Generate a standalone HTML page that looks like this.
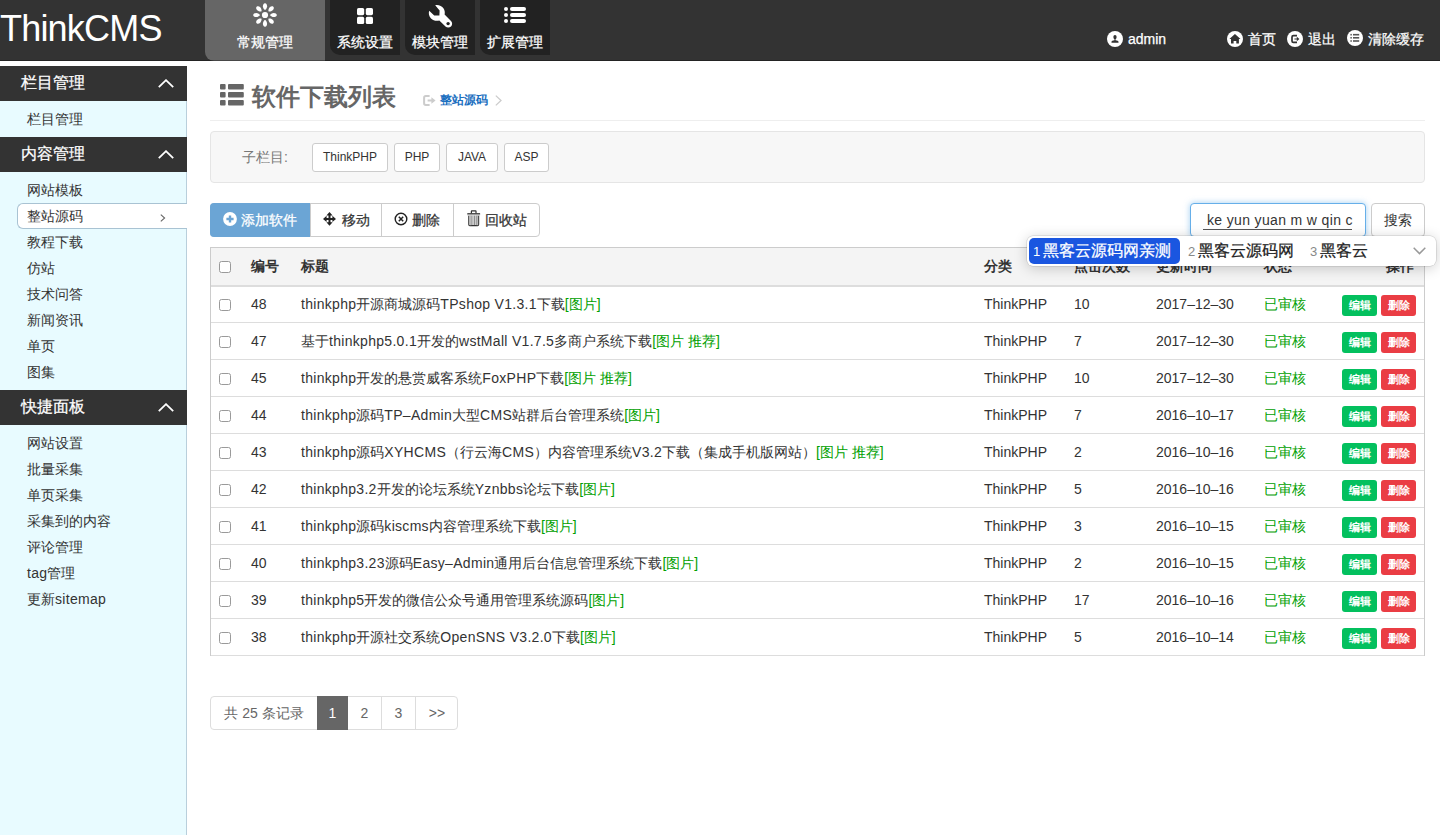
<!DOCTYPE html>
<html><head><meta charset="utf-8">
<style>
*{box-sizing:border-box;margin:0;padding:0}
html,body{width:1440px;height:835px;overflow:hidden;background:#fff}
body{font-family:"Liberation Sans",sans-serif;font-size:14px;color:#333;position:relative}
.abs{position:absolute}
#hd{position:absolute;left:0;top:0;width:1440px;height:61px;background:#333}
#hdl{position:absolute;left:0;top:60px;width:1440px;height:1px;background:rgba(0,0,0,.3)}
#logo{position:absolute;left:0;top:9px;font-size:36px;line-height:40px;color:#fff;letter-spacing:-0.8px}
.tab{position:absolute;top:0;height:55px;background:#222;border-bottom-left-radius:10px;color:#fff;text-align:center}
.tab.on{background:#666;height:61px;border-bottom-left-radius:9px}
.tab span{position:absolute;left:0;right:0;top:34px;font-size:14px;line-height:16px;font-weight:500}
.tab svg{position:absolute}
.hr{position:absolute;top:31px;color:#fff;font-size:14px;line-height:16px}
.hic{position:absolute;top:31px;width:16px;height:16px}
#side{position:absolute;left:0;top:66px;width:187px;height:769px;background:#e8fbff;border-right:1px solid #b9cfdc}
.sh{position:absolute;left:0;width:187px;height:35px;background:#333;color:#fff;font-size:16px;line-height:33px;padding-left:21px}
.sh svg{position:absolute;left:158px;top:13px}
.si{position:absolute;left:27px;font-size:14px;line-height:26px;color:#333}
#cur{position:absolute;left:17px;top:137px;width:170px;height:26px;background:#fff;border:1px solid #a9c3d3;border-right:none;border-radius:6px 0 0 6px}

#ttl{position:absolute;left:252px;top:83px;font-size:24px;line-height:28px;color:#666;font-weight:bold}
#bc{position:absolute;left:440px;top:93px;font-size:12px;line-height:14px;color:#1b6fbf;font-weight:bold}
#hrl{position:absolute;left:210px;top:120px;width:1215px;height:1px;background:#eee}
#sub{position:absolute;left:210px;top:131px;width:1215px;height:52px;background:#f7f7f7;border:1px solid #e5e5e5;border-radius:4px}
#sub .lb{position:absolute;left:31px;top:17px;font-size:14px;line-height:16px;color:#777}
.sb{position:absolute;top:11px;height:29px;border:1px solid #ccc;border-radius:3px;background:#fff;font-size:12px;line-height:27px;text-align:center;color:#333}
#tb{position:absolute;left:210px;top:203px;width:330px;height:34px;border:1px solid #ccc;border-radius:4px;background:#fff}
.tbb{position:absolute;top:0;height:32px;border-left:1px solid #ccc;font-size:14px;line-height:32px;color:#333}
.tbb svg{position:absolute}
.tbb span{position:absolute;top:0}
#sinp{position:absolute;left:1190px;top:203px;width:176px;height:34px;border:1px solid #66afe9;border-radius:4px;background:#fff;box-shadow:0 0 6px rgba(102,175,233,.6)}
#sinp span{position:absolute;left:16px;top:8px;font-size:14px;line-height:16px;color:#333;white-space:nowrap;letter-spacing:0.35px}
#sinp i{position:absolute;left:12px;top:25px;width:149px;height:1px;background:#555}
#sbtn{position:absolute;left:1371px;top:203px;width:54px;height:34px;border:1px solid #ccc;border-radius:4px;background:#fff;font-size:14px;line-height:32px;text-align:center;color:#333}

#tbl{position:absolute;left:210px;top:247px;width:1215px;height:409px;border:1px solid #ccc;background:#fff}
#th{position:absolute;left:0;top:0;width:1213px;height:39px;background:#f4f4f4;border-bottom:2px solid #ddd}
.tr{position:absolute;left:0;width:1213px;height:37px;border-bottom:1px solid #ddd}
.c{position:absolute;top:0;line-height:36px;white-space:nowrap;font-size:14px;color:#333}
#th .c{line-height:37px;font-weight:bold}
.cb{position:absolute;left:8px;width:12px;height:12px;border:1px solid #9a9a9a;border-radius:2.5px;background:#fff}
.g{color:#00a000}
.g b{font-weight:bold}
.l{font-style:normal;letter-spacing:0.3px}
.eb,.db{position:absolute;top:9px;width:35px;height:21px;border-radius:3px;color:#fff;font-size:11px;line-height:21px;text-align:center;font-weight:bold}
.eb{left:1131px;background:#03c05e}
.db{left:1170px;background:#ea3d44}

#ime{position:absolute;left:1027px;top:236px;width:409px;height:30px;background:#fff;border-radius:6px;box-shadow:0 0 0 0.5px rgba(0,0,0,.16),0 2px 14px rgba(0,0,0,.2)}
#ime .sel{position:absolute;left:2px;top:2px;width:151px;height:26px;background:#1a56e0;border-radius:5px}
#ime .n{position:absolute;top:8px;font-size:13px;line-height:16px;color:#888}
#ime .w{position:absolute;top:5px;font-size:16px;line-height:20px;color:#222;white-space:nowrap}
#pg{position:absolute;left:210px;top:696px;width:248px;height:34px;border:1px solid #ddd;border-radius:4px;background:#fff}
.pc{position:absolute;top:0;height:32px;line-height:32px;text-align:center;font-size:14px;color:#666;border-left:1px solid #ddd}
.tab span,.sh,.hr,#ime .w,.tbb span{-webkit-text-stroke:0.25px currentColor}
</style></head><body>
<div id="hd">
  <div id="logo">ThinkCMS</div>
  <div class="tab on" style="left:205px;width:120px">
    <svg style="left:48px;top:3px" width="24" height="24" viewBox="0 0 24 24"><g fill="#fff">
      <circle cx="12" cy="12" r="3.1"/>
      <path d="M12 0.2C13.4 0.2 14.1 1.7 14.1 3.2C14.1 4.8 12.8 6.9 12 6.9C11.2 6.9 9.9 4.8 9.9 3.2C9.9 1.7 10.6 0.2 12 0.2Z" transform="rotate(0 12 12)"/><path d="M12 0.2C13.4 0.2 14.1 1.7 14.1 3.2C14.1 4.8 12.8 6.9 12 6.9C11.2 6.9 9.9 4.8 9.9 3.2C9.9 1.7 10.6 0.2 12 0.2Z" transform="rotate(45 12 12)"/><path d="M12 0.2C13.4 0.2 14.1 1.7 14.1 3.2C14.1 4.8 12.8 6.9 12 6.9C11.2 6.9 9.9 4.8 9.9 3.2C9.9 1.7 10.6 0.2 12 0.2Z" transform="rotate(90 12 12)"/><path d="M12 0.2C13.4 0.2 14.1 1.7 14.1 3.2C14.1 4.8 12.8 6.9 12 6.9C11.2 6.9 9.9 4.8 9.9 3.2C9.9 1.7 10.6 0.2 12 0.2Z" transform="rotate(135 12 12)"/><path d="M12 0.2C13.4 0.2 14.1 1.7 14.1 3.2C14.1 4.8 12.8 6.9 12 6.9C11.2 6.9 9.9 4.8 9.9 3.2C9.9 1.7 10.6 0.2 12 0.2Z" transform="rotate(180 12 12)"/><path d="M12 0.2C13.4 0.2 14.1 1.7 14.1 3.2C14.1 4.8 12.8 6.9 12 6.9C11.2 6.9 9.9 4.8 9.9 3.2C9.9 1.7 10.6 0.2 12 0.2Z" transform="rotate(225 12 12)"/><path d="M12 0.2C13.4 0.2 14.1 1.7 14.1 3.2C14.1 4.8 12.8 6.9 12 6.9C11.2 6.9 9.9 4.8 9.9 3.2C9.9 1.7 10.6 0.2 12 0.2Z" transform="rotate(270 12 12)"/><path d="M12 0.2C13.4 0.2 14.1 1.7 14.1 3.2C14.1 4.8 12.8 6.9 12 6.9C11.2 6.9 9.9 4.8 9.9 3.2C9.9 1.7 10.6 0.2 12 0.2Z" transform="rotate(315 12 12)"/>
    </g></svg>
    <span>常规管理</span>
  </div>
  <div class="tab" style="left:330px;width:70px">
    <svg style="left:27px;top:8px" width="16" height="16" viewBox="0 0 16 16"><g fill="#fff">
      <rect x="0" y="0" width="7.2" height="7.2" rx="1.6"/><rect x="8.8" y="0" width="7.2" height="7.2" rx="1.6"/>
      <rect x="0" y="8.8" width="7.2" height="7.2" rx="1.6"/><rect x="8.8" y="8.8" width="7.2" height="7.2" rx="1.6"/></g></svg>
    <span>系统设置</span>
  </div>
  <div class="tab" style="left:405px;width:70px">
    <svg style="left:20px;top:0px" width="30" height="30" viewBox="0 0 30 30"><path fill="#fff" d="M10.2 5.2C13.5 4.6 16.8 5.8 18.6 8.6C19.8 10.4 20.1 12.6 19.6 14.6L26 20.9C27.5 22.4 27.5 24.9 26 26.4C24.5 27.9 22 27.9 20.5 26.4L14.3 20.4C11.5 21.2 8.2 20.6 6 18.4C4 16.4 3.3 13.4 4.2 10.8L9.2 15.5L14.4 15.5L14.6 10.6Z"/><circle cx="23.1" cy="23.6" r="1.7" fill="#222"/></svg>
    <span>模块管理</span>
  </div>
  <div class="tab" style="left:480px;width:70px">
    <svg style="left:24px;top:6px" width="22" height="18" viewBox="0 0 22 18"><g fill="#fff">
      <circle cx="2" cy="3" r="2"/><circle cx="2" cy="9" r="2"/><circle cx="2" cy="15" r="2"/>
      <rect x="6" y="1" width="16" height="4" rx="2"/><rect x="6" y="7" width="16" height="4" rx="2"/><rect x="6" y="13" width="16" height="4" rx="2"/></g></svg>
    <span>扩展管理</span>
  </div>
  <svg class="hic" style="left:1107px" viewBox="0 0 16 16"><circle cx="8" cy="8" r="8" fill="#fff"/><path fill="#333" d="M8 3.9C9 3.9 9.6 4.8 9.6 5.9C9.6 7 9.1 7.8 8.5 8.3L8.5 9.2C10.2 9.4 11.5 10 11.5 10.8L11.5 11.8L4.5 11.8L4.5 10.8C4.5 10 5.8 9.4 7.5 9.2L7.5 8.3C6.9 7.8 6.4 7 6.4 5.9C6.4 4.8 7 3.9 8 3.9Z"/></svg>
  <div class="hr" style="left:1128px">admin</div>
  <svg class="hic" style="left:1227px" viewBox="0 0 16 16"><circle cx="8" cy="8" r="8" fill="#fff"/><path fill="#333" d="M7.95 3L13.5 8L11.9 8L11.9 12.4L9.3 12.4L9.3 10.1L6.6 10.1L6.6 12.4L4 12.4L4 8L2.4 8Z"/></svg>
  <div class="hr" style="left:1248px">首页</div>
  <svg class="hic" style="left:1287px" viewBox="0 0 16 16"><circle cx="8" cy="8" r="8" fill="#fff"/><path fill="none" stroke="#333" stroke-width="1.7" d="M10 4.7L6.4 4.7Q5 4.7 5 6.1L5 9.9Q5 11.3 6.4 11.3L10 11.3"/><path fill="#333" d="M7.4 7.4L9.8 7.4L9.8 5.8L12.4 8L9.8 10.2L9.8 8.6L7.4 8.6Z"/></svg>
  <div class="hr" style="left:1308px">退出</div>
  <svg class="hic" style="left:1347px;top:30px" viewBox="0 0 16 16"><circle cx="8" cy="8" r="8" fill="#fff"/><g fill="#555"><rect x="3.4" y="3.9" width="1.4" height="1.6"/><rect x="3.4" y="7" width="1.4" height="1.6"/><rect x="3.4" y="10.2" width="1.4" height="1.6"/><rect x="6" y="3.9" width="6.2" height="1.6"/><rect x="6" y="7" width="6.2" height="1.6"/><rect x="6" y="10.2" width="6.2" height="1.6"/></g></svg>
  <div class="hr" style="left:1368px">清除缓存</div>
  <div id="hdl"></div>
</div>
<div id="side">
  <div class="sh" style="top:0px">栏目管理<svg width="16" height="9" viewBox="0 0 16 9"><path d="M0.8 8.2L8 1.2L15.2 8.2" fill="none" stroke="#fff" stroke-width="1.8"/></svg></div>
  <div class="si" style="top:40px">栏目管理</div>
  <div class="sh" style="top:71px">内容管理<svg width="16" height="9" viewBox="0 0 16 9"><path d="M0.8 8.2L8 1.2L15.2 8.2" fill="none" stroke="#fff" stroke-width="1.8"/></svg></div>
  <div id="cur"><svg style="position:absolute;left:142px;top:10px" width="6" height="8" viewBox="0 0 6 8"><path d="M0.8 0.6L4.6 4L0.8 7.4" fill="none" stroke="#666" stroke-width="1.1"/></svg></div>
  <div class="si" style="top:111px">网站模板</div>
  <div class="si" style="top:137px">整站源码</div>
  <div class="si" style="top:163px">教程下载</div>
  <div class="si" style="top:189px">仿站</div>
  <div class="si" style="top:215px">技术问答</div>
  <div class="si" style="top:241px">新闻资讯</div>
  <div class="si" style="top:267px">单页</div>
  <div class="si" style="top:293px">图集</div>
  <div class="sh" style="top:324px">快捷面板<svg width="16" height="9" viewBox="0 0 16 9"><path d="M0.8 8.2L8 1.2L15.2 8.2" fill="none" stroke="#fff" stroke-width="1.8"/></svg></div>
  <div class="si" style="top:364px">网站设置</div>
  <div class="si" style="top:390px">批量采集</div>
  <div class="si" style="top:416px">单页采集</div>
  <div class="si" style="top:442px">采集到的内容</div>
  <div class="si" style="top:468px">评论管理</div>
  <div class="si" style="top:494px"><i class="l">tag</i>管理</div>
  <div class="si" style="top:520px">更新<i class="l">sitemap</i></div>
</div>
<svg class="abs" style="left:220px;top:84px" width="24" height="22" viewBox="0 0 24 22"><g fill="#666">
  <rect x="0" y="0" width="5.6" height="5.6" rx="1"/><rect x="8" y="0" width="15.8" height="5.6" rx="1"/>
  <rect x="0" y="8.1" width="5.6" height="5.5" rx="1"/><rect x="8" y="8.1" width="15.8" height="5.5" rx="1"/>
  <rect x="0" y="16" width="5.6" height="5.6" rx="1"/><rect x="8" y="16" width="15.8" height="5.6" rx="1"/></g></svg>
<div id="ttl">软件下载列表</div>
<svg class="abs" style="left:423px;top:95px" width="13" height="11" viewBox="0 0 13 11"><path fill="none" stroke="#ccc" stroke-width="2" d="M6.6 1.1L2.8 1.1Q1.1 1.1 1.1 2.8L1.1 8.2Q1.1 9.9 2.8 9.9L6.6 9.9"/><path fill="#ccc" d="M4.6 4.4L8.4 4.4L8.4 2.2L12.6 5.5L8.4 8.8L8.4 6.6L4.6 6.6Z"/></svg>
<div id="bc">整站源码</div>
<svg class="abs" style="left:495px;top:95px" width="7" height="11" viewBox="0 0 7 11"><path d="M0.8 0.6L6 5.5L0.8 10.4" fill="none" stroke="#ccc" stroke-width="1.3"/></svg>
<div id="hrl"></div>
<div id="sub">
  <div class="lb">子栏目:</div>
  <div class="sb" style="left:101px;width:76px">ThinkPHP</div>
  <div class="sb" style="left:183px;width:46px">PHP</div>
  <div class="sb" style="left:235px;width:52px">JAVA</div>
  <div class="sb" style="left:293px;width:45px">ASP</div>
</div>
<div id="tb">
  <div class="tbb" style="left:-1px;top:-1px;height:34px;width:100px;background:#6ba5d5;border:none;border-radius:4px 0 0 4px;color:#fff">
    <svg style="left:13px;top:9px" width="14" height="14" viewBox="0 0 14 14"><circle cx="7" cy="7" r="6.9" fill="#fff"/><path d="M7 3.4V10.6M3.4 7H10.6" stroke="#6ba5d5" stroke-width="2.4"/></svg>
    <span style="left:31px;line-height:34px">添加软件</span>
  </div>
  <div class="tbb" style="left:99px;width:72px">
    <svg style="left:12px;top:8px" width="14" height="15" viewBox="0 0 14 15"><path fill="#222" d="M6.5 0L9.6 3.6L7.5 3.6L7.5 5.9L9.4 5.9L9.4 3.8L13 6.9L9.4 10L9.4 7.9L7.5 7.9L7.5 10.2L9.6 10.2L6.5 13.8L3.4 10.2L5.5 10.2L5.5 7.9L3.6 7.9L3.6 10L0 6.9L3.6 3.8L3.6 5.9L5.5 5.9L5.5 3.6L3.4 3.6Z"/></svg>
    <span style="left:31px">移动</span>
  </div>
  <div class="tbb" style="left:170px;width:72px">
    <svg style="left:12px;top:8px" width="14" height="14" viewBox="0 0 14 14"><circle cx="7" cy="7" r="5.8" fill="none" stroke="#222" stroke-width="1.4"/><path d="M4.8 4.8L9.2 9.2M9.2 4.8L4.8 9.2" stroke="#222" stroke-width="1.5"/></svg>
    <span style="left:30px">删除</span>
  </div>
  <div class="tbb" style="left:242px;width:87px">
    <svg style="left:13px;top:6px" width="14" height="17" viewBox="0 0 14 17"><g fill="none" stroke="#333"><path stroke-width="1.2" d="M4.4 3.2V1.3Q4.4 0.9 4.8 0.9H8.6Q9 0.9 9 1.3V3.2"/><path stroke-width="1.5" d="M0.3 3.9H13.1"/><path stroke-width="1.2" d="M1.8 5.4V14.6Q1.8 15.6 2.8 15.6H10.6Q11.6 15.6 11.6 14.6V5.4"/><path stroke-width="1" d="M4.9 5.4V15.4M7.2 5.4V15.4M9.2 5.4V15.4" opacity=".8"/></g><rect x="2.4" y="5.2" width="2" height="10" fill="#bbb"/><rect x="9.6" y="5.2" width="1.6" height="10" fill="#bbb"/><rect x="0.3" y="4.6" width="12.8" height="0.9" fill="#ccc"/></svg>
    <span style="left:31px">回收站</span>
  </div>
</div>
<div id="sinp"><span>ke yun yuan m w qin c</span><i></i></div>
<div id="sbtn">搜索</div>
<div id="tbl">
<div id="th"><div class="cb" style="top:13px"></div><div class="c" style="left:40px">编号</div><div class="c" style="left:90px">标题</div><div class="c" style="left:773px">分类</div><div class="c" style="left:863px">点击次数</div><div class="c" style="left:945px">更新时间</div><div class="c" style="left:1053px">状态</div><div class="c" style="left:1175px">操作</div></div>
<div class="tr" style="top:38px"><div class="cb" style="top:13px"></div><div class="c" style="left:40px">48</div><div class="c" style="left:90px"><i class="l">thinkphp</i>开源商城源码<i class="l">TPshop V1.3.1</i>下载<span class="g">[图片]</span></div><div class="c" style="left:773px">ThinkPHP</div><div class="c" style="left:863px">10</div><div class="c" style="left:945px">2017–12–30</div><div class="c g" style="left:1053px">已审核</div><div class="eb">编辑</div><div class="db">删除</div></div>
<div class="tr" style="top:75px"><div class="cb" style="top:13px"></div><div class="c" style="left:40px">47</div><div class="c" style="left:90px">基于<i class="l">thinkphp5.0.1</i>开发的<i class="l">wstMall V1.7.5</i>多商户系统下载<span class="g">[图片 推荐]</span></div><div class="c" style="left:773px">ThinkPHP</div><div class="c" style="left:863px">7</div><div class="c" style="left:945px">2017–12–30</div><div class="c g" style="left:1053px">已审核</div><div class="eb">编辑</div><div class="db">删除</div></div>
<div class="tr" style="top:112px"><div class="cb" style="top:13px"></div><div class="c" style="left:40px">45</div><div class="c" style="left:90px"><i class="l">thinkphp</i>开发的悬赏威客系统<i class="l">FoxPHP</i>下载<span class="g">[图片 推荐]</span></div><div class="c" style="left:773px">ThinkPHP</div><div class="c" style="left:863px">10</div><div class="c" style="left:945px">2017–12–30</div><div class="c g" style="left:1053px">已审核</div><div class="eb">编辑</div><div class="db">删除</div></div>
<div class="tr" style="top:149px"><div class="cb" style="top:13px"></div><div class="c" style="left:40px">44</div><div class="c" style="left:90px"><i class="l">thinkphp</i>源码<i class="l">TP–Admin</i>大型<i class="l">CMS</i>站群后台管理系统<span class="g">[图片]</span></div><div class="c" style="left:773px">ThinkPHP</div><div class="c" style="left:863px">7</div><div class="c" style="left:945px">2016–10–17</div><div class="c g" style="left:1053px">已审核</div><div class="eb">编辑</div><div class="db">删除</div></div>
<div class="tr" style="top:186px"><div class="cb" style="top:13px"></div><div class="c" style="left:40px">43</div><div class="c" style="left:90px"><i class="l">thinkphp</i>源码<i class="l">XYHCMS</i>（行云海<i class="l">CMS</i>）内容管理系统<i class="l">V3.2</i>下载（集成手机版网站）<span class="g">[图片 推荐]</span></div><div class="c" style="left:773px">ThinkPHP</div><div class="c" style="left:863px">2</div><div class="c" style="left:945px">2016–10–16</div><div class="c g" style="left:1053px">已审核</div><div class="eb">编辑</div><div class="db">删除</div></div>
<div class="tr" style="top:223px"><div class="cb" style="top:13px"></div><div class="c" style="left:40px">42</div><div class="c" style="left:90px"><i class="l">thinkphp3.2</i>开发的论坛系统<i class="l">Yznbbs</i>论坛下载<span class="g">[图片]</span></div><div class="c" style="left:773px">ThinkPHP</div><div class="c" style="left:863px">5</div><div class="c" style="left:945px">2016–10–16</div><div class="c g" style="left:1053px">已审核</div><div class="eb">编辑</div><div class="db">删除</div></div>
<div class="tr" style="top:260px"><div class="cb" style="top:13px"></div><div class="c" style="left:40px">41</div><div class="c" style="left:90px"><i class="l">thinkphp</i>源码<i class="l">kiscms</i>内容管理系统下载<span class="g">[图片]</span></div><div class="c" style="left:773px">ThinkPHP</div><div class="c" style="left:863px">3</div><div class="c" style="left:945px">2016–10–15</div><div class="c g" style="left:1053px">已审核</div><div class="eb">编辑</div><div class="db">删除</div></div>
<div class="tr" style="top:297px"><div class="cb" style="top:13px"></div><div class="c" style="left:40px">40</div><div class="c" style="left:90px"><i class="l">thinkphp3.23</i>源码<i class="l">Easy–Admin</i>通用后台信息管理系统下载<span class="g">[图片]</span></div><div class="c" style="left:773px">ThinkPHP</div><div class="c" style="left:863px">2</div><div class="c" style="left:945px">2016–10–15</div><div class="c g" style="left:1053px">已审核</div><div class="eb">编辑</div><div class="db">删除</div></div>
<div class="tr" style="top:334px"><div class="cb" style="top:13px"></div><div class="c" style="left:40px">39</div><div class="c" style="left:90px"><i class="l">thinkphp5</i>开发的微信公众号通用管理系统源码<span class="g">[图片]</span></div><div class="c" style="left:773px">ThinkPHP</div><div class="c" style="left:863px">17</div><div class="c" style="left:945px">2016–10–16</div><div class="c g" style="left:1053px">已审核</div><div class="eb">编辑</div><div class="db">删除</div></div>
<div class="tr" style="top:371px"><div class="cb" style="top:13px"></div><div class="c" style="left:40px">38</div><div class="c" style="left:90px"><i class="l">thinkphp</i>开源社交系统<i class="l">OpenSNS V3.2.0</i>下载<span class="g">[图片]</span></div><div class="c" style="left:773px">ThinkPHP</div><div class="c" style="left:863px">5</div><div class="c" style="left:945px">2016–10–14</div><div class="c g" style="left:1053px">已审核</div><div class="eb">编辑</div><div class="db">删除</div></div>
</div>
<div id="ime">
  <div class="sel"></div>
  <div class="n" style="left:6px;color:#fff">1</div><div class="w" style="left:16px;color:#fff">黑客云源码网亲测</div>
  <div class="n" style="left:161px">2</div><div class="w" style="left:171px">黑客云源码网</div>
  <div class="n" style="left:283px">3</div><div class="w" style="left:293px">黑客云</div>
  <svg style="position:absolute;left:386px;top:11px" width="13" height="8" viewBox="0 0 13 8"><path d="M0.7 0.8L6.5 6.6L12.3 0.8" fill="none" stroke="#999" stroke-width="1.5"/></svg>
</div>
<div id="pg">
  <div class="pc" style="left:0;width:106px;border-left:none">共 25 条记录</div>
  <div class="pc" style="left:106px;width:31px;top:-1px;height:34px;line-height:34px;background:#666;color:#fff;border-left:none">1</div>
  <div class="pc" style="left:137px;width:33px;border-left:none">2</div>
  <div class="pc" style="left:170px;width:34px">3</div>
  <div class="pc" style="left:204px;width:43px">&gt;&gt;</div>
</div>
</body></html>
